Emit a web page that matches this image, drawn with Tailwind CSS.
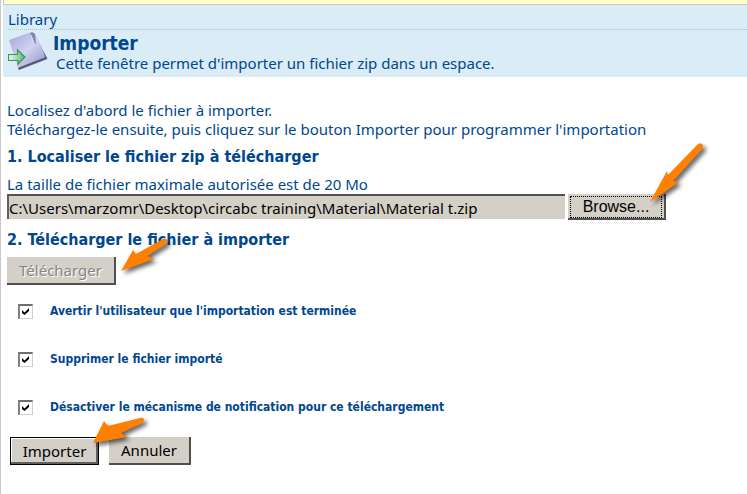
<!DOCTYPE html>
<html lang="fr">
<head>
<meta charset="utf-8">
<meta name="viewport" content="width=device-width, initial-scale=1">
<title>Importer</title>
<script src="https://cdn.jsdelivr.net/npm/@tailwindcss/browser@4"></script>
</head>
<body class="min-h-screen bg-white font-['Noto_Sans','DejaVu_Sans',sans-serif] text-[15px] leading-[19px] text-[#00478f]">
<div class="min-h-screen border-l border-[#c8c8c8] pl-[2px]">
  <div class="h-[5px] border-b border-l border-[#c8c8c8] bg-[#ffffcc]"></div>
  <header class="bg-[#daecf6] pt-[5px] pl-[5px] pb-px">
    <p class="border-b border-dotted border-[#b4c4cc]">Library</p>
    <div class="flex gap-[5px]">
      <svg class="mt-px h-10 w-10 shrink-0" viewBox="0 0 40 40" aria-hidden="true">
        <defs>
          <linearGradient id="sheet" x1="0" y1="0" x2="1" y2="1"><stop offset="0" stop-color="#a5a4d8"/><stop offset=".5" stop-color="#d0d1f3"/><stop offset="1" stop-color="#9292b8"/></linearGradient>
          <linearGradient id="go" x1="0" y1="0" x2="1" y2="0"><stop offset="0" stop-color="#effaf0"/><stop offset="1" stop-color="#54b86f"/></linearGradient>
          <filter id="soft"><feGaussianBlur stdDeviation=".6"/></filter>
        </defs>
        <path d="M2 10 26 2 39.500 28 11 39Z" fill="#74749b" filter="url(#soft)"/>
        <path d="M1 9 23 1 27 3 38 26 10 37Z" fill="url(#sheet)"/>
        <path d="M10 37 37 26.500 36 21 39 27.500 11 38.500Z" fill="#55557c"/>
        <path d="M22 3 24 1 27 3 28 13 26 12Z" fill="#8586b0"/>
        <path d="M23 4 26 12" stroke="#e6e6ff"/>
        <path d="M.5 23.500H9.500V19L17 26 10 33V29.500H.5Z" fill="url(#go)" stroke="#38975a" stroke-width="1.200"/>
      </svg>
      <div class="pt-[2px]">
        <h1 class="font-['DejaVu_Sans_Condensed','DejaVu_Sans',sans-serif] text-[19px] leading-[22px] font-bold">Importer</h1>
        <p class="pl-[3px] pb-[3px]">Cette fenêtre permet d'importer un fichier zip dans un espace.</p>
      </div>
    </div>
  </header>
  <main class="pt-6 pl-1">
    <p>Localisez d'abord le fichier à importer.<br>Téléchargez-le ensuite, puis cliquez sur le bouton Importer pour programmer l'importation</p>
    <h2 class="mt-2 font-['DejaVu_Sans_Condensed','DejaVu_Sans',sans-serif] text-[16px] font-bold">1. Localiser le fichier zip à télécharger</h2>
    <label for="file" class="mt-[9px] block">La taille de fichier maximale autorisée est de 20 Mo</label>
    <div class="relative flex w-fit max-w-full items-start gap-[3px]">
      <input id="file" type="text" readonly value="C:\Users\marzomr\Desktop\circabc training\Material\Material t.zip" class="h-[25px] w-[558px] min-w-0 border-t-2 border-l-2 border-t-[#505050] border-l-[#606060] bg-[#d4d0c8] text-black outline-none">
      <button type="button" class="h-[26px] w-[98px] shrink-0 border-r-2 border-b-2 border-[#505050] bg-[#d4d0c8] p-[2px] font-['Liberation_Sans',sans-serif] text-[16px] leading-[20px] text-black"><span class="block border border-dotted border-black">Browse...</span></button>
      <svg class="pointer-events-none absolute -top-[54px] -right-[46px] h-[66px] w-[66px] overflow-visible" viewBox="0 0 66 66" aria-hidden="true">
        <path d="M4 62 21 31 22 35 51 5Q54 2 56 4 58 6 56 9L27 41 33 42Z" fill="#ff8000" class="drop-shadow-[3px_3px_2px_rgba(0,0,0,0.6)]"/>
      </svg>
    </div>
    <h2 class="mt-[10px] font-['DejaVu_Sans_Condensed','DejaVu_Sans',sans-serif] text-[16px] font-bold">2. Télécharger le fichier à importer</h2>
    <div class="relative mt-2 w-fit">
      <button type="button" disabled class="block h-7 w-[109px] border-r-2 border-b-2 border-[#505050] bg-[#d4d0c8] text-[#858585] [text-shadow:1px_1px_0_white]">Télécharger</button>
      <svg class="pointer-events-none absolute -top-[19px] left-[112px] h-9 w-[50px] overflow-visible" viewBox="0 0 50 36" aria-hidden="true">
        <path d="M2 33 14 12 17 16 44 1Q47 0 48 2 49 4 47 6L28 18 35 21Z" fill="#ff8000" class="drop-shadow-[3px_3px_2px_rgba(0,0,0,0.6)]"/>
      </svg>
    </div>
    <div class="mt-[17px] flex flex-col gap-[29px] pl-[11px] font-['DejaVu_Sans_Condensed','DejaVu_Sans',sans-serif] text-[12px] font-bold">
      <label class="flex items-center gap-[17px]"><span class="grid"><input type="checkbox" checked class="peer col-start-1 row-start-1 size-[15px] appearance-none border border-t-2 border-l-2 border-t-[#707070] border-l-[#808080] border-r-[#d4d0c8] border-b-[#d4d0c8] bg-white"><svg class="pointer-events-none col-start-1 row-start-1 size-[15px] opacity-0 peer-checked:opacity-100" viewBox="0 0 15 15" aria-hidden="true"><path d="M4 6 6.500 8.500 11 4V7L6.500 11 4 9Z"/></svg></span>Avertir l'utilisateur que l'importation est terminée</label>
      <label class="flex items-center gap-[17px]"><span class="grid"><input type="checkbox" checked class="peer col-start-1 row-start-1 size-[15px] appearance-none border border-t-2 border-l-2 border-t-[#707070] border-l-[#808080] border-r-[#d4d0c8] border-b-[#d4d0c8] bg-white"><svg class="pointer-events-none col-start-1 row-start-1 size-[15px] opacity-0 peer-checked:opacity-100" viewBox="0 0 15 15" aria-hidden="true"><path d="M4 6 6.500 8.500 11 4V7L6.500 11 4 9Z"/></svg></span>Supprimer le fichier importé</label>
      <label class="flex items-center gap-[17px]"><span class="grid"><input type="checkbox" checked class="peer col-start-1 row-start-1 size-[15px] appearance-none border border-t-2 border-l-2 border-t-[#707070] border-l-[#808080] border-r-[#d4d0c8] border-b-[#d4d0c8] bg-white"><svg class="pointer-events-none col-start-1 row-start-1 size-[15px] opacity-0 peer-checked:opacity-100" viewBox="0 0 15 15" aria-hidden="true"><path d="M4 6 6.500 8.500 11 4V7L6.500 11 4 9Z"/></svg></span>Désactiver le mécanisme de notification pour ce téléchargement</label>
    </div>
    <div class="relative mt-5 flex w-fit gap-[10px] pl-[3px] text-black">
      <button type="submit" class="h-7 w-[89px] border border-black bg-[#d4d0c8] shadow-[inset_-2px_-2px_0_#606060,inset_1px_1px_0_white]">Importer</button>
      <button type="button" class="h-7 w-[82px] border-r-2 border-b-2 border-[#505050] bg-[#d4d0c8]">Annuler</button>
      <svg class="pointer-events-none absolute -top-[20px] left-[84px] h-7 w-[54px] overflow-visible" viewBox="0 0 54 28" aria-hidden="true">
        <path d="M2 26 13 4 17 9 49 1Q53 0 53 3 53 5 51 6L30 16 36 20Z" fill="#ff8000" class="drop-shadow-[3px_3px_2px_rgba(0,0,0,0.6)]"/>
      </svg>
    </div>
  </main>
</div>
</body>
</html>
